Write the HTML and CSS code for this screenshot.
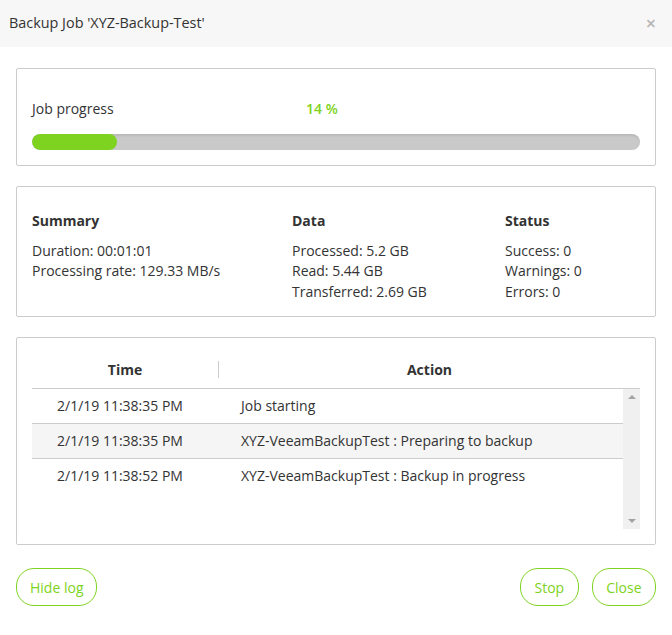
FILE: index.html
```html
<!DOCTYPE html>
<html>
<head>
<meta charset="utf-8">
<link rel="stylesheet" href="styles.css">
</head>
<body>
<div class="dialog">
  <div class="header">
    <span class="title">Backup Job 'XYZ-Backup-Test'</span>
    <span class="close">×</span>
  </div>
  <div class="content">
    <div class="panel progress-panel">
      <div class="progress-row">
        <span class="progress-label">Job progress</span>
        <span class="progress-value">14 %</span>
      </div>
      <div class="bar"><div class="bar-fill" style="width:14%"></div></div>
    </div>
    <div class="panel stats-panel">
      <div class="col col-summary">
        <div class="col-title">Summary</div>
        <div>Duration: 00:01:01</div>
        <div>Processing rate: 129.33 MB/s</div>
      </div>
      <div class="col col-data">
        <div class="col-title">Data</div>
        <div>Processed: 5.2 GB</div>
        <div>Read: 5.44 GB</div>
        <div>Transferred: 2.69 GB</div>
      </div>
      <div class="col col-status">
        <div class="col-title">Status</div>
        <div>Success: 0</div>
        <div>Warnings: 0</div>
        <div>Errors: 0</div>
      </div>
    </div>
    <div class="panel log-panel">
      <div class="log-head">
        <div class="th th-time">Time</div>
        <div class="th th-action">Action</div>
      </div>
      <div class="log-body">
        <div class="rows">
          <div class="row"><div class="td-time">2/1/19 11:38:35 PM</div><div class="td-action">Job starting</div></div>
          <div class="row alt"><div class="td-time">2/1/19 11:38:35 PM</div><div class="td-action">XYZ-VeeamBackupTest : Preparing to backup</div></div>
          <div class="row"><div class="td-time">2/1/19 11:38:52 PM</div><div class="td-action">XYZ-VeeamBackupTest : Backup in progress</div></div>
        </div>
        <div class="scrollbar">
          <span class="arrow up"></span>
          <span class="arrow down"></span>
        </div>
      </div>
    </div>
    <div class="footer">
      <button class="btn">Hide log</button>
      <div class="footer-right">
        <button class="btn">Stop</button>
        <button class="btn">Close</button>
      </div>
    </div>
  </div>
</div>
</body>
</html>
```
FILE: styles.css
```css
* { box-sizing: border-box; }
html, body { margin: 0; padding: 0; background: #fff; }
body {
  font-family: "Open Sans", "Noto Sans", sans-serif;
  font-size: 14px;
  color: #333;
  width: 672px;
  height: 635px;
  overflow: hidden;
}
.header {
  height: 47px;
  background: #f7f7f7;
  display: flex;
  align-items: center;
  justify-content: space-between;
  padding: 0 16px 2px 9px;
}
.title { font-size: 14.4px; color: #333; }
.close { color: #b5b5b5; font-size: 18px; line-height: 1; font-weight: 600; }
.content { padding: 21px 16px 0 16px; }
.panel {
  border: 1px solid #ccc;
  border-radius: 2px;
  margin-bottom: 20px;
}
.progress-panel { padding: 28px 15px 14px 15px; height: 98px; }
.progress-row { display: flex; height: 24px; line-height: 24px; }
.progress-label { width: 274px; }
.progress-value { color: #7ed321; font-weight: 600; }
.bar {
  margin-top: 13px;
  height: 16px;
  border-radius: 8px;
  background: #c9c9c9;
  box-shadow: inset 0 2px 2px rgba(0,0,0,0.08);
  overflow: hidden;
}
.bar-fill { height: 100%; background: #7ed321; border-radius: 8px; }
.stats-panel {
  display: flex;
  padding: 24px 15px 14px 15px;
  height: 131px;
  line-height: 20.5px;
}
.col-title { font-weight: 700; margin-bottom: 9px; }
.col-summary { width: 260px; }
.col-data { width: 213px; }
.log-panel { padding: 14px 15px 15px 15px; height: 208px; }
.log-head {
  display: flex;
  height: 37px;
  align-items: center;
  border-bottom: 1px solid #ccc;
  font-weight: 700;
  padding-bottom: 2px;
}
.th { text-align: center; }
.th-time { width: 187px; border-right: 1px solid #ccc; line-height: 17px; }
.th-action { flex: 1; }
.log-body { display: flex; height: 140px; }
.rows { flex: 1; }
.row {
  display: flex;
  height: 35px;
  align-items: center;
  border-bottom: 1px solid #ccc;
  padding-bottom: 2px;
}
.row:last-child { border-bottom: none; }
.row.alt { background: #f5f5f5; }
.td-time { width: 186px; padding-left: 25px; }
.td-action { padding-left: 23px; }
.scrollbar {
  width: 17px;
  background: #f0f0f0;
  display: flex;
  flex-direction: column;
  justify-content: space-between;
  align-items: center;
  padding: 6px 0 6px 0;
}
.arrow { width: 0; height: 0; border-left: 4px solid transparent; border-right: 4px solid transparent; }
.arrow.up { border-bottom: 4px solid #a3a3a3; }
.arrow.down { border-top: 4px solid #a3a3a3; }
.footer {
  display: flex;
  justify-content: space-between;
  margin-top: 4px;
}
.footer-right { display: flex; gap: 13px; }
.btn {
  font-family: "Open Sans", "Noto Sans", sans-serif;
  font-size: 14px;
  color: #7ed321;
  background: #fff;
  border: 1px solid #7ed321;
  border-radius: 18px;
  height: 38px;
  padding: 0 13px;
  margin-top: 3px;
}
.footer-right .btn { padding: 0 13.5px; }
```
